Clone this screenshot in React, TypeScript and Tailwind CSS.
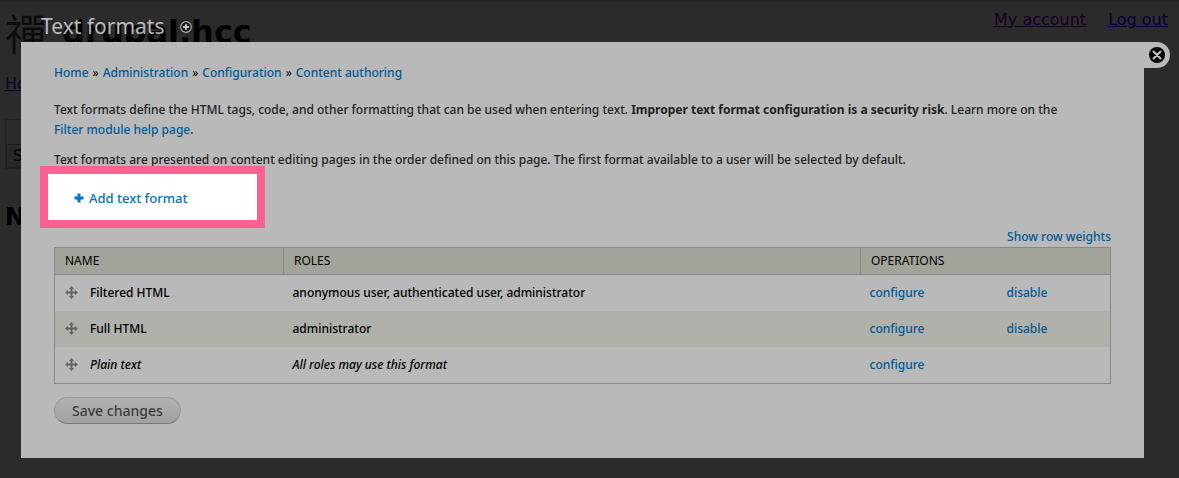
import React from "react";

const linkClass = "font-medium whitespace-nowrap text-[#005a96] hover:underline";

type Format = {
  name: string;
  roles: string;
  canDisable: boolean;
  fallback?: boolean;
};

const formats: Format[] = [
  {
    name: "Filtered HTML",
    roles: "anonymous user, authenticated user, administrator",
    canDisable: true,
  },
  { name: "Full HTML", roles: "administrator", canDisable: true },
  {
    name: "Plain text",
    roles: "All roles may use this format",
    canDisable: false,
    fallback: true,
  },
];

const crumbs = ["Home", "Administration", "Configuration", "Content authoring"];

function MoveIcon() {
  return (
    <svg viewBox="0 0 13 13" className="size-[13px] shrink-0" fill="#626262" aria-hidden="true">
      <path d="M5.6 2h1.8v3.6H11v1.8H7.4V11H5.6V7.4H2V5.6h3.6z" />
      <path d="M6.5 0 9 3H4zM6.5 13 4 10h5zM0 6.5 3 4v5zM13 6.5 10 9V4z" />
    </svg>
  );
}

/* The site page that stays visible, dimmed, behind the overlay. */
function SitePage() {
  return (
    <div className="absolute inset-0 overflow-hidden border-t-2 border-[#252525] pr-[11px] pl-[5px] font-['DejaVu_Sans',sans-serif]">
      <header className="flex h-[66px] items-start justify-between">
        <div className="flex items-center pt-2">
          <span
            aria-hidden="true"
            className="w-[57px] font-['Noto_Sans_CJK_TC',sans-serif] text-[42px] leading-[44px] text-[#0c0c0c]"
          >
            禪
          </span>
          <span className="text-[32px] leading-[40px] font-bold text-black">drupal.hcc</span>
        </div>
        <nav className="flex gap-[22px] pt-[8px] text-[16px] leading-[20px] underline">
          <a href="#account" className="text-[#150026]">My account</a>
          <a href="#logout" className="text-[#00003c]">Log out</a>
        </nav>
      </header>
      <a href="#home" className="mt-[6px] block text-[16px] leading-[20px] text-[#150026] underline">
        Home
      </a>
      <div className="mt-[25px] w-[160px] border border-[#232323]">
        <div className="h-[24px]" />
        <button type="button" className="h-[24px] border border-[#1c1c1c] bg-[#282828] px-[6px] text-[15px] leading-[20px] text-black">
          Search
        </button>
      </div>
      <h2 className="mt-[32px] text-[24px] leading-[32px] font-bold text-black">Navigation</h2>
    </div>
  );
}

export default function App() {
  return (
    <div className="relative min-h-screen bg-[#2b2b2b] pr-[35px] pb-5 pl-[21px] font-['Noto_Sans',sans-serif] text-[12px] leading-[20px] text-black">
      <SitePage />
      <div className="relative">
        <div className="flex h-[42px] items-center gap-4 pt-[10px] pl-[20px]">
          <h1 className="text-[21px] leading-[24px] text-[#b9b9b9]">Text formats</h1>
          <button type="button" aria-label="Add to shortcuts" className="pt-[2px]">
            <svg viewBox="0 0 12 12" className="size-[12px]" aria-hidden="true">
              <circle cx="6" cy="6" r="5.3" fill="#151515" stroke="#a8a8a8" strokeWidth="1.2" />
              <path d="M6 3v6M3 6h6" stroke="#c8c8c8" strokeWidth="1.8" />
            </svg>
          </button>
        </div>

        <main className="relative bg-[#b9b9b9] px-[33px] pt-[21px] pb-[34px]">
          <button
            type="button"
            aria-label="Close overlay"
            className="absolute top-0 left-full flex size-[26px] items-center justify-center rounded-r-full bg-[#b9b9b9]"
          >
            <svg viewBox="0 0 16 16" className="size-[16px]" aria-hidden="true">
              <circle cx="8" cy="8" r="8" fill="#000" />
              <path d="m4.5 4.5 7 7m0-7-7 7" stroke="#c4c4c4" strokeWidth="2" strokeLinecap="round" />
            </svg>
          </button>

          <nav aria-label="Breadcrumb">
            <ol className="flex gap-1">
              {crumbs.map((crumb, i) => (
                <li key={crumb} className="flex gap-1">
                  {i > 0 && <span aria-hidden="true">»</span>}
                  <a href="#crumb" className={linkClass}>{crumb}</a>
                </li>
              ))}
            </ol>
          </nav>

          <p className="mt-[17px] font-medium text-[#222]">
            Text formats define the HTML tags, code, and other formatting that can be used when
            entering text. <strong>Improper text format configuration is a security risk</strong>.
            Learn more on the{" "}
            <a href="#help" className={linkClass}>Filter module help page</a>.
          </p>
          <p className="mt-[10px] font-medium text-[#222]">
            Text formats are presented on content editing pages in the order defined on this page.
            The first format available to a user will be selected by default.
          </p>

          <div className="relative mt-[18px] flex w-fit pl-5">
            <span className="absolute -top-[22px] -left-[14px] h-[62px] w-[225px] border-8 border-[#ff6092] bg-white" />
            <a href="#add" className="relative flex items-center gap-[5px] text-[13px] font-medium text-[#0074bd]">
              <svg viewBox="0 0 10 10" className="size-[10px]" aria-hidden="true">
                <path d="M5 .5v9M.5 5h9" stroke="#0074bd" strokeWidth="3" />
              </svg>
              Add text format
            </a>
          </div>

          <div className="mt-[19px] flex justify-end">
            <a href="#weights" className={linkClass}>Show row weights</a>
          </div>

          <table className="w-full table-fixed border-collapse border border-[#888984] text-left font-medium">
            <colgroup>
              <col className="w-[229px]" />
              <col />
              <col className="w-[137px]" />
              <col className="w-[113px]" />
            </colgroup>
            <thead className="bg-[#a2a39a]">
              <tr className="h-[27px] border-b border-[#888984]">
                <th className="border-r border-[#888984] px-[10px] py-0 font-normal">NAME</th>
                <th className="border-r border-[#888984] px-[10px] py-0 font-normal">ROLES</th>
                <th colSpan={2} className="px-[10px] py-0 font-normal">OPERATIONS</th>
              </tr>
            </thead>
            <tbody>
              {formats.map((f) => (
                <tr key={f.name} className={f.fallback ? "h-[37px] italic" : "h-9 even:bg-[#b0b1aa]"}>
                  <td className="px-[10px] py-0">
                    <span className="flex items-center gap-3">
                      <MoveIcon />
                      {f.name}
                    </span>
                  </td>
                  <td className="px-[9px] py-0">{f.roles}</td>
                  <td className="px-[9px] py-0 not-italic">
                    <a href="#configure" className={linkClass}>configure</a>
                  </td>
                  <td className="px-[9px] py-0 not-italic">
                    {f.canDisable && <a href="#disable" className={linkClass}>disable</a>}
                  </td>
                </tr>
              ))}
            </tbody>
          </table>

          <button
            type="submit"
            className="mt-[13px] block h-[27px] rounded-full border border-[#999] border-b-[#777] bg-linear-to-b from-[#b1b1b1] to-[#a2a2a2] px-[17px] text-[14px] leading-[20px] font-medium text-[#3c3c3c]"
          >
            Save changes
          </button>
        </main>
      </div>
    </div>
  );
}
